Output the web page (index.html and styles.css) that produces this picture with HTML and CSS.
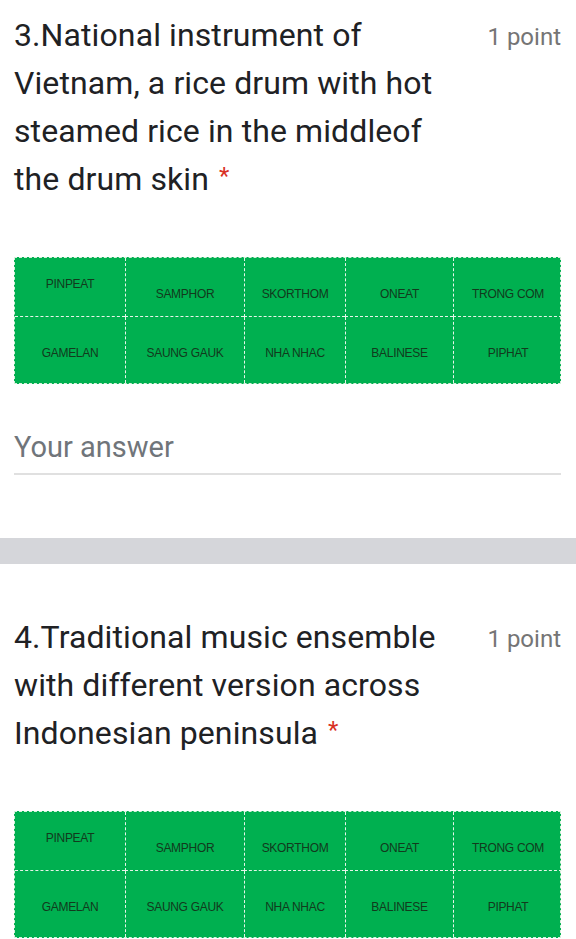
FILE: index.html
```html
<!DOCTYPE html>
<html lang="en">

<head>
  <meta charset="UTF-8" />
  <meta name="viewport" content="width=device-width, initial-scale=1.0" />
  <title>Quiz</title>
  <link rel="stylesheet" href="styles.css">
</head>

<body>
  <!-- 第3题 -->
  <div class="question q3">
    <div class="head">
      <div class="title">3.National instrument of Vietnam, a rice drum with hot steamed rice in the middleof the drum skin<span class="req">*</span></div>
      <div class="point">1 point</div>
    </div>
    <div class="grid">
      <div class="cell top first">PINPEAT</div>
      <div class="cell top">SAMPHOR</div>
      <div class="cell top">SKORTHOM</div>
      <div class="cell top">ONEAT</div>
      <div class="cell top">TRONG COM</div>
      <div class="cell bottom">GAMELAN</div>
      <div class="cell bottom">SAUNG GAUK</div>
      <div class="cell bottom">NHA NHAC</div>
      <div class="cell bottom">BALINESE</div>
      <div class="cell bottom">PIPHAT</div>
    </div>
    <div class="answer">Your answer</div>
  </div>

  <div class="band"></div>

  <!-- 第4题 -->
  <div class="question q4">
    <div class="head">
      <div class="title">4.Traditional music ensemble with different version across Indonesian peninsula<span class="req">*</span></div>
      <div class="point">1 point</div>
    </div>
    <div class="grid">
      <div class="cell top first">PINPEAT</div>
      <div class="cell top">SAMPHOR</div>
      <div class="cell top">SKORTHOM</div>
      <div class="cell top">ONEAT</div>
      <div class="cell top">TRONG COM</div>
      <div class="cell bottom">GAMELAN</div>
      <div class="cell bottom">SAUNG GAUK</div>
      <div class="cell bottom">NHA NHAC</div>
      <div class="cell bottom">BALINESE</div>
      <div class="cell bottom">PIPHAT</div>
    </div>
  </div>
</body>

</html>
```

FILE: styles.css
```css
* {
  margin: 0;
  padding: 0;
  box-sizing: border-box;
}

body {
  background: #fff;
  font-family: Roboto, "Noto Sans", sans-serif;
  color: #202124;
}

.question {
  padding: 0 15px 0 14px;
}

.q3 {
  padding-top: 11px;
}

.q4 {
  padding-top: 49px;
}

.head {
  display: flex;
  align-items: flex-start;
  gap: 26px;
}

.title {
  flex: 1;
  font-size: 32px;
  line-height: 48px;
  letter-spacing: 0.1px;
}

/* 必填星号 */
.req {
  display: inline-block;
  margin-left: 10px;
  color: #d93025;
  font-size: 24px;
  line-height: 1;
  vertical-align: 6px;
}

.point {
  font-size: 24px;
  line-height: 48px;
  padding-top: 2px;
  color: #757575;
  white-space: nowrap;
}

.grid {
  display: grid;
  grid-template-columns: 110px 119px 101px 108px 109px;
  grid-template-rows: 59px 66px;
  margin-top: 54px;
  background: #00b050;
  border: 1px dashed #d8efdc;
}

.cell {
  display: flex;
  align-items: center;
  justify-content: center;
  font: 12px "Liberation Sans", Arial, sans-serif;
  letter-spacing: -0.3px;
  color: #123a1d;
  border-left: 1px dashed #e6f5e9;
}

.cell:nth-child(5n+1) {
  border-left: none;
}

.cell.top {
  padding-top: 13px;
  border-bottom: 1px dashed #e6f5e9;
}

.cell.top.first {
  padding-top: 0;
  padding-bottom: 7px;
}

.cell.bottom {
  padding-top: 6px;
}

.answer {
  margin-top: 45px;
  font-size: 29px;
  line-height: 36px;
  color: #70757a;
  padding-bottom: 8px;
  border-bottom: 2px solid #e0e0e0;
}

.band {
  margin-top: 63px;
  height: 26px;
  background: #d5d6da;
}
```
